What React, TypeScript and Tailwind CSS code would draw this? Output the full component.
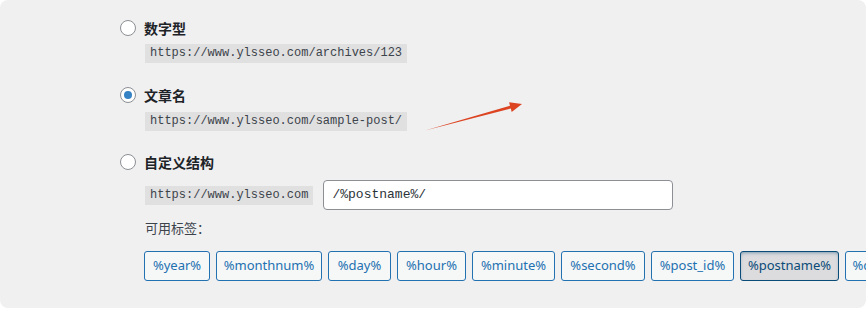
import React from 'react';

const tags = [
  { label: '%year%', w: 'w-[66px]' },
  { label: '%monthnum%', w: 'w-[106px]' },
  { label: '%day%', w: 'w-[63px]' },
  { label: '%hour%', w: 'w-[69px]' },
  { label: '%minute%', w: 'w-[83px]' },
  { label: '%second%', w: 'w-[84px]' },
  { label: '%post_id%', w: 'w-[83px]' },
  { label: '%postname%', w: 'w-[99px]', active: true },
  { label: '%category%', w: 'w-[90px]' },
];

const Radio: React.FC<{ checked?: boolean; label: string }> = ({ checked, label }) => (
  <div className="flex items-center gap-2 h-5">
    <span className="w-4 h-4 rounded-full border border-[#8c8f94] bg-white flex items-center justify-center shrink-0">
      {checked && <span className="w-2 h-2 rounded-full bg-[#3582c4]"></span>}
    </span>
    <span className="text-[14px] font-bold text-[#1d2327] leading-5 [font-family:'Noto_Sans_CJK_SC',sans-serif]">{label}</span>
  </div>
);

const Code: React.FC<{ children: React.ReactNode }> = ({ children }) => (
  <code className="block bg-[#e0e0e1] text-[#3c434a] text-[12px] leading-[19px] h-[19px] px-[5px] [font-family:'Liberation_Mono',monospace]">
    {children}
  </code>
);

const App: React.FC = () => {
  return (
    <div className="bg-white w-[867px] h-[309px]">
      <div className="relative w-[866px] h-[308px] bg-[#f0f0f1] rounded-lg overflow-hidden pl-[120px] pt-[18px]">
        <Radio label="数字型" />
        <div className="pl-[25px] mt-[6px] flex">
          <Code>https://www.ylsseo.com/archives/123</Code>
        </div>

        <div className="mt-[22px]">
          <Radio checked label="文章名" />
        </div>
        <div className="pl-[25px] mt-[7px] flex">
          <Code>https://www.ylsseo.com/sample-post/</Code>
        </div>

        <div className="mt-[21px]">
          <Radio label="自定义结构" />
        </div>
        <div className="pl-[25px] mt-[8px] flex items-center gap-[10px]">
          <Code>https://www.ylsseo.com</Code>
          <div className="w-[350px] h-[30px] bg-white border border-[#8c8f94] rounded-[4px] px-2 flex items-center text-[13px] text-[#2c3338] [font-family:'Liberation_Mono',monospace]">
            /%postname%/
          </div>
        </div>

        <div className="pl-[25px] mt-[10px] text-[13px] leading-4 h-4 text-[#3c434a] [font-family:'Noto_Sans_CJK_SC',sans-serif]">
          可用标签：
        </div>

        <div className="pl-[24px] mt-[15px] flex gap-[6px] flex-nowrap">
          {tags.map((t) => (
            <button
              key={t.label}
              className={`${t.w} shrink-0 h-[30px] rounded-[3px] border text-[13px] flex items-center justify-center [font-family:'Noto_Sans',sans-serif] ${
                t.active
                  ? 'bg-[#dcdcde] border-[#0a4b78] text-[#0a4b78] shadow-[inset_0_2px_5px_-3px_#0a4b78]'
                  : 'bg-[#f6f7f7] border-[#2271b1] text-[#2271b1]'
              }`}
            >
              {t.label}
            </button>
          ))}
        </div>

        <svg className="absolute left-0 top-0 pointer-events-none" width="866" height="308">
          <polygon
            points="425,130.5 510,105.7 509.1,102.3 522,104 511.7,111.9 510.8,108.5"
            fill="#dc4422"
          />
        </svg>
      </div>
    </div>
  );
};

export default App;
